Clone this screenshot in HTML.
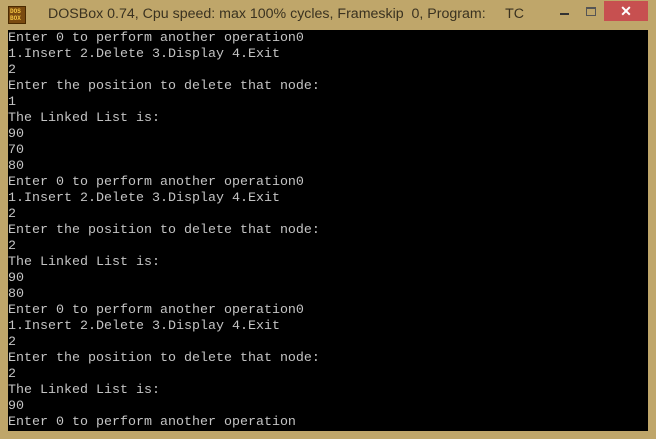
<!DOCTYPE html>
<html><head><style>
html,body{margin:0;padding:0;}
body{width:656px;height:439px;background:#BFA66A;position:relative;overflow:hidden;font-family:"Liberation Sans",sans-serif;}
#title{position:absolute;left:48px;top:6px;font-size:14.2px;color:#3a3220;white-space:pre;}
#icon{position:absolute;left:8px;top:6px;width:16px;height:16px;background:#7a4a10;border:1px solid #4a2a00;}
#icon span{position:absolute;left:1px;font:bold 6px "Liberation Mono",monospace;color:#f5c542;line-height:6px;}
#min{position:absolute;left:560px;top:13px;width:9px;height:2px;background:#333;}
#max{position:absolute;left:586px;top:7px;width:8px;height:6px;border:1px solid #555;border-top-width:2px;}
#close{position:absolute;left:604px;top:1px;width:44px;height:20px;background:#C75050;color:#fff;font-size:14px;text-align:center;line-height:20px;font-weight:bold;}
#con{position:absolute;left:8px;top:30px;width:640px;height:401px;background:#000;}
pre{margin:0;position:absolute;left:0;top:1px;font-family:"Liberation Mono",monospace;font-size:13.33px;line-height:16px;color:#c4c4c4;}
</style></head><body>
<div id="icon"><span style="top:2px">DOS</span><span style="top:9px">BOX</span></div>
<div id="title">DOSBox 0.74, Cpu speed: max 100% cycles, Frameskip  0, Program:     TC</div>
<div id="min"></div><div id="max"></div><div id="close">✕</div>
<div id="con"><pre>Enter 0 to perform another operation0
1.Insert 2.Delete 3.Display 4.Exit
2
Enter the position to delete that node:
1
The Linked List is:
90
70
80
Enter 0 to perform another operation0
1.Insert 2.Delete 3.Display 4.Exit
2
Enter the position to delete that node:
2
The Linked List is:
90
80
Enter 0 to perform another operation0
1.Insert 2.Delete 3.Display 4.Exit
2
Enter the position to delete that node:
2
The Linked List is:
90
Enter 0 to perform another operation</pre></div>
</body></html>
